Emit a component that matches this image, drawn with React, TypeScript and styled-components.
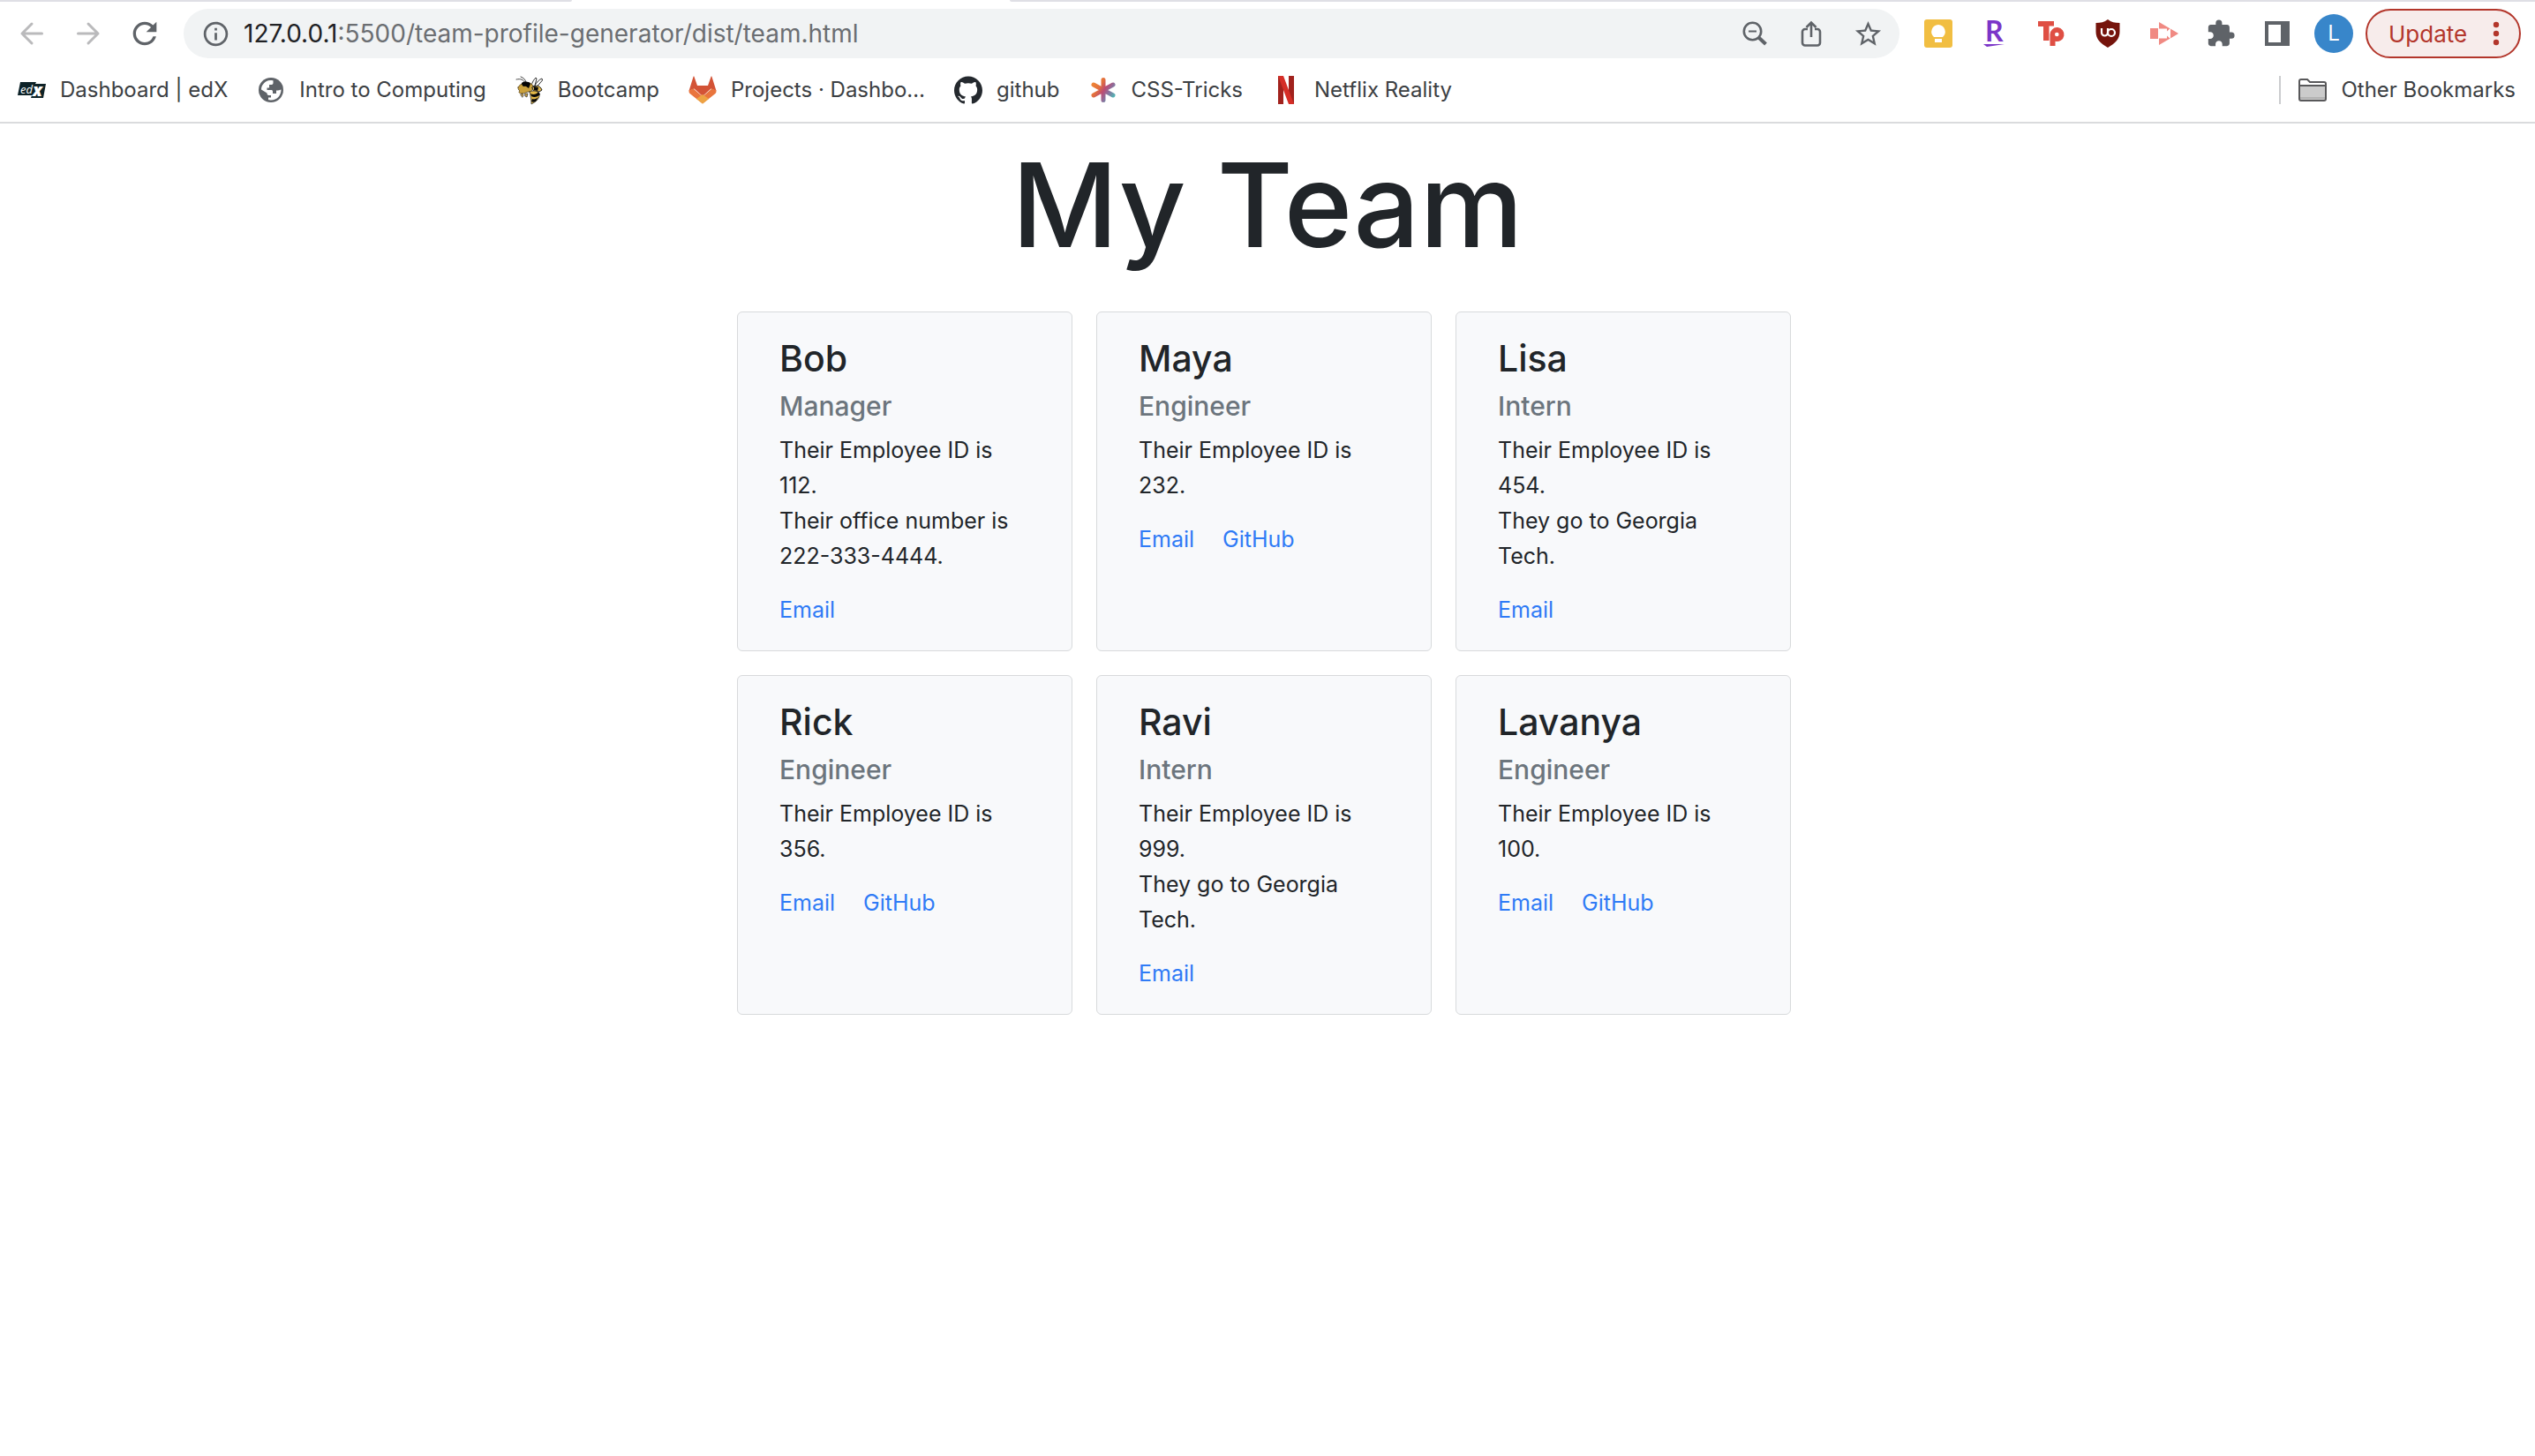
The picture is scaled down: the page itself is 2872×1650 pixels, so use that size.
import React from 'react';
import styled, { createGlobalStyle } from 'styled-components';
import { MdExtension, MdRefresh, MdInfoOutline, MdStarBorder } from 'react-icons/md';

const GlobalStyle = createGlobalStyle`
  * { box-sizing: border-box; }
  body { margin: 0; background: #fff; color: #212529; font-family: Inter, "Liberation Sans", sans-serif; }
  h1, h2, h3, p, ul { margin: 0; padding: 0; }
  button { font: inherit; border: 0; background: none; padding: 0; }
  svg { display: block; flex: none; overflow: visible; }
`;

const TabStrip = styled.div`
  display: grid;
  grid-template-columns: 648px 1fr;
  column-gap: 496px;
  height: 2px;
`;
const InactiveTabs = styled.div<{ $side: 'left' | 'right' }>`
  background: #dfdfe5;
  border-bottom-${p => (p.$side === 'left' ? 'right' : 'left')}-radius: 8px;
`;
const Toolbar = styled.div`
  display: flex;
  align-items: center;
  padding: 8px 16px 8px 4px;
  color: #5f6368;
`;
const IconButton = styled.button<{ $faded?: boolean }>`
  width: 64px;
  height: 56px;
  flex: none;
  display: flex;
  align-items: center;
  justify-content: center;
  color: ${p => (p.$faded ? '#bababc' : '#5f6368')};
`;
const Omnibox = styled.div`
  flex: 1;
  min-width: 0;
  display: flex;
  align-items: center;
  height: 56px;
  margin: 0 12px;
  padding: 0 4px;
  border-radius: 28px;
  background: #f1f3f4;
`;
const Url = styled.div`
  flex: 1;
  min-width: 0;
  font-size: 28px;
  line-height: 36px;
  color: #6b6e72;
  white-space: nowrap;
`;
const Host = styled.span`
  color: #202124;
`;
const Avatar = styled.span`
  width: 44px;
  height: 44px;
  border-radius: 50%;
  background: #3886ca;
  color: #fff;
  font-size: 24px;
  line-height: 44px;
  text-align: center;
`;
const UpdateButton = styled.button`
  display: flex;
  align-items: center;
  justify-content: space-between;
  width: 176px;
  height: 56px;
  margin-left: 4px;
  padding: 0 14px 0 24px;
  border: 2px solid #b3362b;
  border-radius: 28px;
  background: #f7eceb;
  color: #b3362b;
  font-size: 26px;
`;
const BookmarksBar = styled.nav`
  display: flex;
  align-items: center;
  height: 66px;
  padding: 0 22px 8px 20px;
  border-bottom: 2px solid #dadbdd;
`;
const BookmarkList = styled.div`
  flex: 1;
  display: flex;
  gap: 33px;
`;
const Bookmark = styled.a`
  display: flex;
  align-items: center;
  gap: 16px;
  font-size: 24px;
  line-height: 32px;
  color: #3c4043;
  text-decoration: none;
  white-space: nowrap;
`;
const IconSlot = styled.span`
  width: 32px;
  height: 32px;
  display: flex;
  align-items: center;
  justify-content: center;
`;
const Divider = styled.span`
  width: 2px;
  height: 32px;
  margin-right: 20px;
  background: #cbccce;
`;

const Page = styled.main`
  display: flex;
  flex-direction: column;
  align-items: center;
`;
const Title = styled.h1`
  font-size: 132px;
  line-height: 184px;
  font-weight: 500;
`;
const Team = styled.div`
  display: grid;
  grid-template-columns: repeat(3, 380px);
  gap: 27px;
  margin: 29px 8px 29px 0;
`;
const Card = styled.article`
  padding: 28px 47px 26px;
  border: 1px solid #d8dadc;
  border-radius: 6px;
  background: #f8f9fb;
`;
const Name = styled.h2`
  font-size: 41px;
  line-height: 48px;
  font-weight: 500;
`;
const Role = styled.h3`
  margin: 12px 0;
  font-size: 30px;
  line-height: 36px;
  font-weight: 500;
  color: #6c757d;
`;
const Fact = styled.p`
  font-size: 25px;
  line-height: 40px;
`;
const Links = styled.div`
  display: flex;
  gap: 32px;
  margin-top: 21px;
`;
const CardLink = styled.a`
  font-size: 25px;
  line-height: 40px;
  color: #2f7bf6;
  text-decoration: none;
`;

const Arrow = ({ flip }: { flip?: boolean }) => (
  <svg width="28" height="28" viewBox="0 0 28 28" fill="none" stroke="currentColor" strokeWidth="3" strokeLinecap="round" strokeLinejoin="round">
    <path d={flip ? 'M2.5 14H25M14 3l11 11-11 11' : 'M25.5 14H3M14 3L3 14l11 11'} />
  </svg>
);
const ZoomOut = () => (
  <svg width="28" height="28" viewBox="0 0 28 28" fill="none" stroke="currentColor">
    <circle cx="11.5" cy="11.5" r="9.7" strokeWidth="2.6" />
    <path d="M7 11.5h9" strokeWidth="2" />
    <path d="M18.5 18.5L26.5 26" strokeWidth="4" />
  </svg>
);
const Share = () => (
  <svg width="24" height="30" viewBox="0 0 24 30" fill="none" stroke="currentColor" strokeWidth="2.6">
    <path d="M8 10H5a3 3 0 0 0-3 3v12.5a3 3 0 0 0 3 3h14a3 3 0 0 0 3-3V13a3 3 0 0 0-3-3h-3" />
    <path d="M12 19V2.5M6.5 8L12 2.5 17.5 8" />
  </svg>
);
const Keep = () => (
  <svg width="32" height="32" viewBox="0 0 32 32">
    <rect width="32" height="32" rx="3" fill="#f1be42" />
    <path d="M16 6a8 8 0 0 1 5 14H11A8 8 0 0 1 16 6zM12 22h8v4h-8z" fill="#fff" />
  </svg>
);
const Rakuten = () => (
  <svg width="28" height="32" viewBox="0 0 28 32" fill="#7b35c8">
    <text x="3" y="25" fontFamily="Lato" fontWeight="700" fontSize="32">R</text>
    <path d="M1 28h24L5 31z" />
  </svg>
);
const Teleparty = () => (
  <svg width="32" height="32" viewBox="0 0 32 32" fill="#df4f44">
    <path d="M1 2h18v5.500h-5.500V24H7V8H1z" />
    <path fillRule="evenodd" d="M14.500 30V17a8 8 0 1 1 6 7.800V30zM20 17a2.300 2.300 0 1 0 4.600 0 2.300 2.300 0 0 0-4.600 0z" />
  </svg>
);
const Ublock = () => (
  <svg width="28" height="32" viewBox="0 0 28 32" fill="none">
    <path d="M14 0c4 3 8 4 13.5 4v10c0 8-5 13-13.5 18C5.500 27 .5 22 .5 14V4C6 4 10 3 14 0z" fill="#75140c" />
    <path d="M7 10v5a3.500 3.500 0 0 0 7 0v-5" stroke="#fff" strokeWidth="2.2" />
    <circle cx="18" cy="15" r="4" stroke="#fff" strokeWidth="2.2" />
  </svg>
);
const Screencastify = () => (
  <svg width="32" height="28" viewBox="0 0 32 28">
    <path d="M0 8h9v12H0zM10 1l20.5 12L32 14l-1.500 1L10 27z" fill="#f08a83" />
    <path d="M10 8.500h9v3l4-3.500v12l-4-3.500v3h-9z" fill="#fff" />
  </svg>
);
const SidePanel = () => (
  <svg width="28" height="28" viewBox="0 0 28 28">
    <path fillRule="evenodd" fill="currentColor" d="M0 0h28v28H0zM4 4v20h14V4z" />
  </svg>
);
const Dots = () => (
  <svg width="20" height="28" viewBox="0 0 20 28" fill="currentColor">
    <circle cx="8" cy="4" r="3.2" /><circle cx="8" cy="14" r="3.2" /><circle cx="8" cy="24" r="3.2" />
  </svg>
);
const Edx = () => (
  <svg width="32" height="20" viewBox="0 0 32 20">
    <path d="M3 1h18l-1 2h12l-3 16H15l1-3H0z" fill="#0d2227" />
    <text x="3" y="13.5" fill="#fff" fontFamily="Open Sans" fontStyle="italic" fontSize="13">ed</text>
    <text x="17" y="17" fill="#fff" fontFamily="Open Sans" fontStyle="italic" fontWeight="800" fontSize="19">x</text>
  </svg>
);
const Globe = () => (
  <svg width="28" height="28" viewBox="0 0 28 28">
    <circle cx="14" cy="14" r="14" fill="#5f6368" />
    <path d="M3 13.5C3 8 7.500 3.500 13 3c1.500 0 3 0 3.500.3V6c0 1.500-1 2-2.500 2h-2v3.500h-2.500V14H14c1.500 0 2 .5 2 2v2h4v-3.500c2.500 0 4.500-.5 5.500-1C25.500 20 21 25.500 14 25.500c-1.500 0-2-.2-3-.5v-2.500h3V20h-2.500c-1.500 0-2-1-2-2.500z" fill="#fff" />
  </svg>
);
const Bee = () => (
  <svg width="32" height="32" viewBox="0 0 32 32" strokeLinecap="round" strokeLinejoin="round">
    <path d="M18 11c1-4 3-7 5-9l1 1-2 8zM22 11c2-4 5-7 8-8l.5 2-6 7z" fill="#fff" stroke="#333" />
    <path d="M1 4c5-1 8 0 10 4M6 1c3 1 5 3 6 6" fill="none" stroke="#444" />
    <path d="M3 13c2-5 12-8 16-3 2 4 0 8-4 8-3 0-4 2-8 2-3 0-4-2-2-3-2-1-2-3-2-4z" fill="#cba13c" stroke="#4d3a12" strokeWidth=".7" />
    <path d="M7 8c3-2 8-2 10 1l-2 5c-2-1-3-3-5-2-2 0-3-2-3-4z" fill="#050505" />
    <path d="M19 13l6-2c2 1 4 2 5 5l-3 2-6-1z" fill="#e0b74d" stroke="#222" />
    <path d="M21 12l5 1-1 4-4-1z" fill="#070707" />
    <path d="M16 18c4-2 10-1 11 2 1 5-3 9-9 12 0-4-1-10-2-14z" fill="#e2b747" stroke="#222" strokeWidth=".7" />
    <path d="M17 20c3 2 7 1 9-2l2 3c-3 3-7 4-10 2zM19 26c2 1 5 0 7-2l-3 5c-2 1-4 1-5 0z" fill="#090909" />
    <path d="M6 21l2-1 1 2-1 2zM11 20l3 0-1 4-2-1z" fill="#c49c42" stroke="#333" strokeWidth=".7" />
  </svg>
);
const Gitlab = () => (
  <svg width="32" height="32" viewBox="0 0 32 32">
    <path d="M.5 17L5.500 1q.5-1.500 1 0L10 11h12l3.500-10q.5-1.500 1 0l5 16-6-2.500L16 23 6.500 14.500z" fill="#d35336" />
    <path d="M.5 16.500L5.500 14.500l10.500 9 10.500-9 5 2q.3 2-1 3.500L16 31.500 1.500 20q-1.300-1.500-1-3.500z" fill="#e9753d" />
    <path d="M9 26L16 21l7 5-7 5.500z" fill="#eda343" />
  </svg>
);
const Github = () => (
  <svg width="32" height="32" viewBox="0 0 24 24" fill="#24292e">
    <path d="M12 .297c-6.63 0-12 5.373-12 12 0 5.303 3.438 9.8 8.205 11.385.6.113.82-.258.82-.577 0-.285-.01-1.04-.015-2.04-3.338.724-4.042-1.61-4.042-1.61C4.422 18.07 3.633 17.7 3.633 17.7c-1.087-.744.084-.729.084-.729 1.205.084 1.838 1.236 1.838 1.236 1.07 1.835 2.809 1.305 3.495.998.108-.776.417-1.305.76-1.605-2.665-.3-5.466-1.332-5.466-5.93 0-1.31.465-2.38 1.235-3.22-.135-.303-.54-1.523.105-3.176 0 0 1.005-.322 3.3 1.23.96-.267 1.98-.399 3-.405 1.02.006 2.04.138 3 .405 2.28-1.552 3.285-1.23 3.285-1.23.645 1.653.24 2.873.12 3.176.765.84 1.23 1.91 1.23 3.22 0 4.61-2.805 5.625-5.475 5.92.42.36.81 1.096.81 2.22 0 1.606-.015 2.896-.015 3.286 0 .315.21.69.825.57C20.565 22.092 24 17.592 24 12.297c0-6.627-5.373-12-12-12" />
  </svg>
);
const CssTricks = () => (
  <svg width="28" height="28" viewBox="0 0 28 28">
    <defs>
      <linearGradient id="asterisk" gradientUnits="userSpaceOnUse" x1="2" y1="6" x2="26" y2="22">
        <stop offset="0" stopColor="#ef8535" /><stop offset=".3" stopColor="#e3703d" /><stop offset=".52" stopColor="#bc4b73" />
        <stop offset=".72" stopColor="#8d6f9c" /><stop offset="1" stopColor="#4fb6b5" />
      </linearGradient>
    </defs>
    <path d="M14 2.500V25.500M3 8l22 12M25 8L3 20" stroke="url(#asterisk)" strokeWidth="5" strokeLinecap="round" />
  </svg>
);
const Netflix = () => (
  <svg width="18" height="32" viewBox="0 0 18 32">
    <rect width="6" height="32" fill="#a1221d" />
    <rect x="12" width="6" height="32" fill="#a1221d" />
    <path d="M0 0h6l12 32h-6z" fill="#d52e27" />
  </svg>
);
const Folder = () => (
  <svg width="32" height="26" viewBox="0 0 32 26">
    <path d="M1 3a2 2 0 0 1 2-2h7l3 3h16a2 2 0 0 1 2 2v3H1z" fill="#fff" stroke="#58585a" strokeWidth="2" />
    <path d="M1 8h30v15a2 2 0 0 1-2 2H3a2 2 0 0 1-2-2z" fill="#cbcbcb" stroke="#58585a" strokeWidth="2" />
    <path d="M2 21h28v2H2z" fill="#b3b3b3" />
  </svg>
);

const bookmarks = [
  { label: 'Dashboard | edX', icon: <Edx /> },
  { label: 'Intro to Computing', icon: <Globe /> },
  { label: 'Bootcamp', icon: <Bee /> },
  { label: 'Projects · Dashbo…', icon: <Gitlab /> },
  { label: 'github', icon: <Github /> },
  { label: 'CSS-Tricks', icon: <CssTricks /> },
  { label: 'Netflix Reality', icon: <Netflix /> },
];

const extensions = [
  { label: 'Keep', icon: <Keep /> },
  { label: 'Rakuten', icon: <Rakuten /> },
  { label: 'Teleparty', icon: <Teleparty /> },
  { label: 'uBlock', icon: <Ublock /> },
  { label: 'Screencastify', icon: <Screencastify /> },
  { label: 'Extensions', icon: <MdExtension size={34} /> },
  { label: 'Side panel', icon: <SidePanel /> },
];

const team = [
  { name: 'Bob', role: 'Manager', facts: ['Their Employee ID is 112.', 'Their office number is 222-333-4444.'], links: ['Email'] },
  { name: 'Maya', role: 'Engineer', facts: ['Their Employee ID is 232.'], links: ['Email', 'GitHub'] },
  { name: 'Lisa', role: 'Intern', facts: ['Their Employee ID is 454.', 'They go to Georgia Tech.'], links: ['Email'] },
  { name: 'Rick', role: 'Engineer', facts: ['Their Employee ID is 356.'], links: ['Email', 'GitHub'] },
  { name: 'Ravi', role: 'Intern', facts: ['Their Employee ID is 999.', 'They go to Georgia Tech.'], links: ['Email'] },
  { name: 'Lavanya', role: 'Engineer', facts: ['Their Employee ID is 100.'], links: ['Email', 'GitHub'] },
];

export default function App() {
  return (
    <>
      <GlobalStyle />
      <header>
        <TabStrip>
          <InactiveTabs $side="left" />
          <InactiveTabs $side="right" />
        </TabStrip>
        <Toolbar>
          <IconButton $faded aria-label="Back"><Arrow /></IconButton>
          <IconButton $faded aria-label="Forward"><Arrow flip /></IconButton>
          <IconButton aria-label="Reload"><MdRefresh size={40} /></IconButton>
          <Omnibox>
            <IconButton aria-label="Site information"><MdInfoOutline size={33} /></IconButton>
            <Url role="textbox" aria-label="Address" contentEditable suppressContentEditableWarning spellCheck={false}>
              <Host>127.0.0.1</Host>:5500/team-profile-generator/dist/team.html
            </Url>
            <IconButton aria-label="Zoom"><ZoomOut /></IconButton>
            <IconButton aria-label="Share"><Share /></IconButton>
            <IconButton aria-label="Bookmark this page"><MdStarBorder size={35} /></IconButton>
          </Omnibox>
          {extensions.map(e => (
            <IconButton key={e.label} aria-label={e.label}>{e.icon}</IconButton>
          ))}
          <IconButton aria-label="Profile"><Avatar>L</Avatar></IconButton>
          <UpdateButton>Update<Dots /></UpdateButton>
        </Toolbar>
        <BookmarksBar>
          <BookmarkList>
            {bookmarks.map(b => (
              <Bookmark key={b.label} href="#">
                <IconSlot>{b.icon}</IconSlot>
                {b.label}
              </Bookmark>
            ))}
          </BookmarkList>
          <Divider />
          <Bookmark href="#">
            <IconSlot><Folder /></IconSlot>
            Other Bookmarks
          </Bookmark>
        </BookmarksBar>
      </header>
      <Page>
        <Title>My Team</Title>
        <Team>
          {team.map(m => (
            <Card key={m.name}>
              <Name>{m.name}</Name>
              <Role>{m.role}</Role>
              {m.facts.map(f => <Fact key={f}>{f}</Fact>)}
              <Links>
                {m.links.map(l => <CardLink key={l} href="#">{l}</CardLink>)}
              </Links>
            </Card>
          ))}
        </Team>
      </Page>
    </>
  );
}
